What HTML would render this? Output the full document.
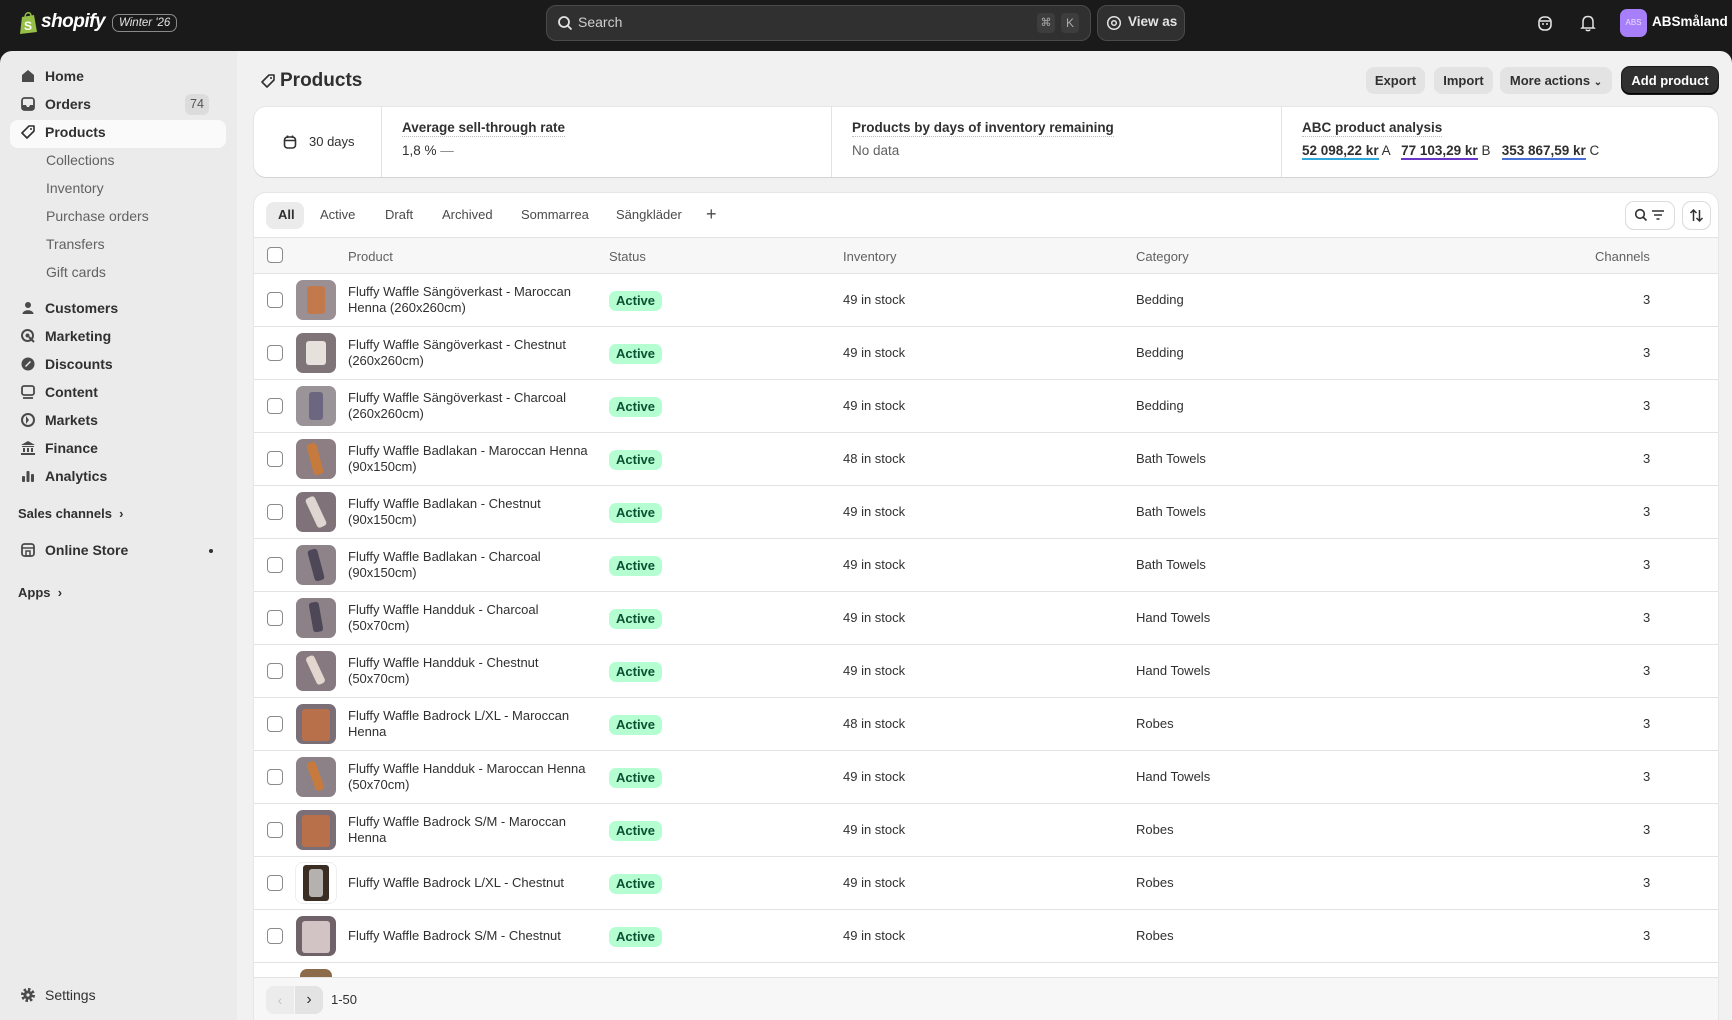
<!DOCTYPE html>
<html style="overflow:hidden;height:1020px"><head><meta charset="utf-8"><style>
*{box-sizing:border-box;margin:0;padding:0}
html,body{overflow:hidden}
body{width:1732px;height:1020px;overflow:hidden;background:#1a1a1a;font-family:"Liberation Sans",sans-serif;color:#303030;font-size:13.5px;position:relative}
.abs{position:absolute}
#top{left:0;top:0;width:1732px;height:51px;background:#1a1a1a}
#side{left:0;top:51px;width:237px;height:969px;background:#ebebeb;border-top-left-radius:12px}
#main{left:237px;top:51px;width:1495px;height:969px;background:#f1f1f1;border-top-right-radius:12px}
.nav{position:absolute;left:45px;font-size:14px;font-weight:600;color:#303030;line-height:20px}
.sub{position:absolute;left:46px;font-size:14px;color:#616161;line-height:20px}
.ic{position:absolute;left:20px;width:16px;height:16px}
.btn{position:absolute;top:67px;height:27px;border-radius:8px;background:#e3e3e3;font-size:13px;font-weight:600;line-height:27px;text-align:center;color:#303030}
.card{position:absolute;background:#fff;border-radius:12px;box-shadow:0 1px 0 #d4d4d4,0 0 0 1px #e6e6e6}
.mt{font-weight:600;font-size:13.5px;border-bottom:1.5px dotted #bbb;padding-bottom:1px;display:inline-block}
.row{position:absolute;left:0;width:1464px;height:53px;border-top:1px solid #e3e3e3}
.cb{position:absolute;left:13px;top:18px;width:16px;height:16px;border:1px solid #8a8a8a;border-radius:4px;background:#fff}
.th{position:absolute;left:42px;top:6px;width:40px;height:40px;border-radius:7px;background:#8e7f86;overflow:hidden}
.th i{position:absolute;display:block;border-radius:3px}
.pn{position:absolute;left:94px;top:10px;width:250px;line-height:16px;font-size:13px;color:#303030}
.pn.one{top:18px}
.st{position:absolute;left:355px;top:17px;background:#b4fed2;color:#0c5132;border-radius:7px;font-size:13px;font-weight:600;padding:2px 7px;line-height:16px}
.inv{position:absolute;left:589px;top:18px;font-size:13px}
.cat{position:absolute;left:882px;top:18px;font-size:13px}
.ch{position:absolute;left:1389px;top:18px;font-size:13px}
.tab{position:absolute;top:12px;font-size:13px;font-weight:500;color:#4a4a4a;line-height:28px}
</style></head><body>
<div id="top" class="abs">
 <svg class="abs" style="left:19px;top:11px" width="20" height="24" viewBox="0 0 20 24"><path d="M3 6 L15 4 L18 21 L1 23 Z" fill="#95bf47"/><path d="M6 6 C6 1 12 0 12 5" stroke="#95bf47" stroke-width="1.5" fill="none"/><text x="5" y="19" font-size="12" font-weight="bold" fill="#fff" font-family="Liberation Sans">S</text></svg>
 <div class="abs" style="left:41px;top:11px;color:#fff;font-size:19px;font-weight:bold;font-style:italic;letter-spacing:-0.5px">shopify</div>
 <div class="abs" style="left:112px;top:14px;border:1px solid #8a8a8a;border-radius:7px;color:#e3e3e3;font-size:11.5px;font-style:italic;padding:2px 6px">Winter '26</div>
 <div class="abs" style="left:546px;top:5px;width:545px;height:36px;background:#303030;border:1px solid #4a4a4a;border-radius:10px"></div>
 <svg class="abs" style="left:557px;top:15px" width="16" height="16" viewBox="0 0 16 16"><circle cx="7" cy="7" r="5" stroke="#e3e3e3" stroke-width="1.8" fill="none"/><path d="M11 11 L14.5 14.5" stroke="#e3e3e3" stroke-width="1.8"/></svg>
 <div class="abs" style="left:578px;top:14px;color:#cfcfcf;font-size:14px">Search</div>
 <div class="abs" style="left:1037px;top:13px;width:18px;height:20px;background:#3d3d3d;border-radius:4px;color:#aaa;font-size:11px;text-align:center;line-height:20px">⌘</div>
 <div class="abs" style="left:1061px;top:13px;width:18px;height:20px;background:#3d3d3d;border-radius:4px;color:#aaa;font-size:12px;text-align:center;line-height:20px">K</div>
 <div class="abs" style="left:1097px;top:5px;width:88px;height:36px;background:#303030;border:1px solid #4a4a4a;border-radius:10px"></div>
 <svg class="abs" style="left:1106px;top:15px" width="16" height="16" viewBox="0 0 16 16"><circle cx="8" cy="8" r="6.3" stroke="#e3e3e3" stroke-width="1.5" fill="none"/><circle cx="8" cy="8" r="2.3" stroke="#e3e3e3" stroke-width="1.5" fill="none"/></svg>
 <div class="abs" style="left:1128px;top:14px;color:#e3e3e3;font-size:13.5px;font-weight:600">View as</div>
 <svg class="abs" style="left:1537px;top:14px" width="16" height="18" viewBox="0 0 16 18"><rect x="2" y="3" width="12" height="13" rx="5" fill="none" stroke="#e3e3e3" stroke-width="1.6"/><path d="M3 7 L13 7 M5 10 L7 10 M9 10 L11 10" stroke="#e3e3e3" stroke-width="1.6"/></svg>
 <svg class="abs" style="left:1580px;top:14px" width="16" height="18" viewBox="0 0 16 18"><path d="M3 13 L3 8 C3 4 5 2.5 8 2.5 C11 2.5 13 4 13 8 L13 13 L14 14 L2 14 Z M6 15.5 C6.5 17 9.5 17 10 15.5" fill="none" stroke="#e3e3e3" stroke-width="1.5"/></svg>
 <div class="abs" style="left:1620px;top:9px;width:27px;height:28px;background:#a77ffa;border-radius:7px;color:#e9e0ff;font-size:8px;text-align:center;line-height:28px">ABS</div>
 <div class="abs" style="left:1652px;top:14px;color:#fff;font-size:13.5px;font-weight:600">ABSmåland</div>
</div>

<div id="side" class="abs">
 <div class="abs" style="left:10px;top:69px;width:216px;height:28px;background:#fafafa;border-radius:8px"></div>
 <div class="abs" style="left:185px;top:43px;width:24px;height:21px;background:#dcdcdc;border-radius:6px;color:#555;font-size:12.5px;text-align:center;line-height:21px">74</div>
</div>
<svg class="ic" style="top:68px" viewBox="0 0 16 16"><path d="M2 7 L8 2 L14 7 L14 14 L2 14 Z" fill="#4a4a4a"/></svg>
<div class="nav" style="top:66px">Home</div>
<svg class="ic" style="top:96px" viewBox="0 0 16 16"><rect x="2" y="2" width="12" height="12" rx="2.5" fill="none" stroke="#4a4a4a" stroke-width="1.8"/><path d="M2 9 L6 9 L7 11 L9 11 L10 9 L14 9 L14 14 L2 14Z" fill="#4a4a4a"/></svg>
<div class="nav" style="top:94px">Orders</div>
<svg class="ic" style="top:124px" viewBox="0 0 16 16"><path d="M9 2 L14 2 L14 7 L7 14 L2 9 Z" fill="none" stroke="#303030" stroke-width="1.6" stroke-linejoin="round"/><circle cx="11" cy="5" r="1" fill="#303030"/></svg>
<div class="nav" style="top:122px">Products</div>
<div class="sub" style="top:150px">Collections</div>
<div class="sub" style="top:178px">Inventory</div>
<div class="sub" style="top:206px">Purchase orders</div>
<div class="sub" style="top:234px">Transfers</div>
<div class="sub" style="top:262px">Gift cards</div>
<svg class="ic" style="top:300px" viewBox="0 0 16 16"><circle cx="8" cy="5" r="3" fill="#4a4a4a"/><path d="M2.5 14 C2.5 9 13.5 9 13.5 14Z" fill="#4a4a4a"/></svg>
<div class="nav" style="top:298px">Customers</div>
<svg class="ic" style="top:328px" viewBox="0 0 16 16"><circle cx="7.5" cy="7.5" r="5.5" fill="none" stroke="#4a4a4a" stroke-width="2"/><circle cx="7.5" cy="7.5" r="2" fill="#4a4a4a"/><path d="M9 9 L14 14" stroke="#4a4a4a" stroke-width="2"/></svg>
<div class="nav" style="top:326px">Marketing</div>
<svg class="ic" style="top:356px" viewBox="0 0 16 16"><circle cx="8" cy="8" r="6.5" fill="#4a4a4a"/><path d="M5.5 10.5 L10.5 5.5" stroke="#ebebeb" stroke-width="1.4"/></svg>
<div class="nav" style="top:354px">Discounts</div>
<svg class="ic" style="top:384px" viewBox="0 0 16 16"><rect x="2" y="2" width="12" height="9" rx="2" fill="none" stroke="#4a4a4a" stroke-width="1.8"/><path d="M3 14 L13 14" stroke="#4a4a4a" stroke-width="1.8"/></svg>
<div class="nav" style="top:382px">Content</div>
<svg class="ic" style="top:412px" viewBox="0 0 16 16"><circle cx="8" cy="8" r="6" fill="none" stroke="#4a4a4a" stroke-width="2"/><path d="M6 4 L9 8 L6 12" fill="#4a4a4a"/></svg>
<div class="nav" style="top:410px">Markets</div>
<svg class="ic" style="top:440px" viewBox="0 0 16 16"><path d="M8 1 L15 5 L1 5 Z M2 6 H14 V7 H2Z M3 8 H5 V12 H3Z M7 8 H9 V12 H7Z M11 8 H13 V12 H11Z M1 13 H15 V15 H1Z" fill="#4a4a4a"/></svg>
<div class="nav" style="top:438px">Finance</div>
<svg class="ic" style="top:468px" viewBox="0 0 16 16"><rect x="2" y="8" width="3" height="6" rx="1" fill="#4a4a4a"/><rect x="6.5" y="3" width="3" height="11" rx="1" fill="#4a4a4a"/><rect x="11" y="6" width="3" height="8" rx="1" fill="#4a4a4a"/></svg>
<div class="nav" style="top:466px">Analytics</div>
<div class="abs" style="left:18px;top:506px;font-size:13px;font-weight:600;color:#303030">Sales channels &nbsp;›</div>
<svg class="ic" style="top:542px" viewBox="0 0 16 16"><rect x="2" y="2" width="12" height="12" rx="2.5" fill="none" stroke="#4a4a4a" stroke-width="1.8"/><path d="M2 6 H14 M6 9 H10 V14 H6Z" stroke="#4a4a4a" stroke-width="1.5" fill="none"/></svg>
<div class="nav" style="top:540px">Online Store</div>
<div class="abs" style="left:209px;top:549px;width:4px;height:4px;border-radius:2px;background:#303030"></div>
<div class="abs" style="left:18px;top:585px;font-size:13px;font-weight:600;color:#303030">Apps &nbsp;›</div>
<svg class="ic" style="top:987px" viewBox="0 0 16 16"><circle cx="8" cy="8" r="5" fill="none" stroke="#4a4a4a" stroke-width="4" stroke-dasharray="2.2 1.7"/><circle cx="8" cy="8" r="4.5" fill="#4a4a4a"/><circle cx="8" cy="8" r="1.6" fill="#ebebeb"/></svg>
<div class="nav" style="top:985px;font-weight:500">Settings</div>

<div id="main" class="abs"></div>
<svg class="abs" style="left:260px;top:73px" width="16" height="16" viewBox="0 0 16 16"><path d="M9 2 L14 2 L14 7 L7 14 L2 9 Z" fill="none" stroke="#303030" stroke-width="1.6" stroke-linejoin="round"/><circle cx="11" cy="5" r="1" fill="#303030"/></svg>
<div class="abs" style="left:280px;top:70px;font-size:19px;font-weight:bold;color:#303030">Products</div>
<div class="btn" style="left:1366px;width:59px">Export</div>
<div class="btn" style="left:1434px;width:59px">Import</div>
<div class="btn" style="left:1500px;width:112px">More actions <span style="font-size:10px">⌄</span></div>
<div class="btn" style="left:1622px;width:96px;background:#303030;color:#fff;box-shadow:inset 0 -1px 0 #000,0 0 0 1px #1a1a1a">Add product</div>

<div class="card" style="left:254px;top:107px;width:1464px;height:70px">
 <svg class="abs" style="left:29px;top:28px" width="14" height="14" viewBox="0 0 14 14"><rect x="1.5" y="2" width="11" height="11" rx="3" fill="none" stroke="#303030" stroke-width="1.6"/><path d="M1.5 5.5 H12.5 M4.5 0.5 V3 M9.5 0.5 V3" stroke="#303030" stroke-width="1.6"/></svg>
 <div class="abs" style="left:55px;top:27px;font-size:13px">30 days</div>
 <div class="abs" style="left:127px;top:0;width:1px;height:70px;background:#e3e3e3"></div>
 <div class="abs" style="left:148px;top:13px"><span class="mt">Average sell-through rate</span><div style="margin-top:6px;font-size:13.5px">1,8 % <span style="color:#888">—</span></div></div>
 <div class="abs" style="left:577px;top:0;width:1px;height:70px;background:#e3e3e3"></div>
 <div class="abs" style="left:598px;top:13px"><span class="mt">Products by days of inventory remaining</span><div style="margin-top:6px;font-size:13.5px;color:#616161">No data</div></div>
 <div class="abs" style="left:1027px;top:0;width:1px;height:70px;background:#e3e3e3"></div>
 <div class="abs" style="left:1048px;top:13px"><span class="mt">ABC product analysis</span>
  <div style="margin-top:6px;font-size:13.5px;white-space:nowrap"><span style="font-weight:600;border-bottom:2px solid #2fa7d8">52 098,22 kr</span> A &nbsp; <span style="font-weight:600;border-bottom:2px solid #6b35c7">77 103,29 kr</span> B &nbsp; <span style="font-weight:600;border-bottom:2px solid #4a6fd6">353 867,59 kr</span> C</div></div>
</div>

<div class="card" style="left:254px;top:193px;width:1464px;height:827px;overflow:hidden;border-bottom-left-radius:0;border-bottom-right-radius:0">
 <div class="abs" style="left:12px;top:9px;width:38px;height:27px;background:#ebebeb;border-radius:8px"></div>
 <div class="tab" style="left:24px;top:8px;color:#303030;font-weight:600">All</div>
 <div class="tab" style="left:66px;top:8px">Active</div>
 <div class="tab" style="left:131px;top:8px">Draft</div>
 <div class="tab" style="left:188px;top:8px">Archived</div>
 <div class="tab" style="left:267px;top:8px">Sommarrea</div>
 <div class="tab" style="left:362px;top:8px">Sängkläder</div>
 <div class="tab" style="left:452px;top:7px;font-size:18px">+</div>
 <div class="abs" style="left:1372px;top:9px;width:48px;height:27px;border-radius:8px;box-shadow:0 0 0 1px #dcdcdc,0 1px 0 #ccc"></div>
 <svg class="abs" style="left:1380px;top:15px" width="34" height="15" viewBox="0 0 34 15"><circle cx="6" cy="6" r="4.3" stroke="#303030" stroke-width="1.6" fill="none"/><path d="M9 9 L12.5 12.5" stroke="#303030" stroke-width="1.6"/><path d="M18 3 H30 M20 7 H28 M22.5 11 H25.5" stroke="#303030" stroke-width="1.6"/></svg>
 <div class="abs" style="left:1429px;top:9px;width:27px;height:27px;border-radius:8px;box-shadow:0 0 0 1px #dcdcdc,0 1px 0 #ccc"></div>
 <svg class="abs" style="left:1435px;top:15px" width="15" height="15" viewBox="0 0 15 15"><path d="M4.5 13 V2 M1.5 5 L4.5 2 L7.5 5 M10.5 2 V13 M7.5 10 L10.5 13 L13.5 10" stroke="#303030" stroke-width="1.5" fill="none"/></svg>
 <div class="abs" style="left:0;top:44px;width:1464px;height:36px;background:#f7f7f7;border-top:1px solid #e3e3e3"></div>
 <div class="cb" style="top:54px"></div>
 <div class="abs" style="left:94px;top:56px;font-size:13px;color:#616161">Product</div>
 <div class="abs" style="left:355px;top:56px;font-size:13px;color:#616161">Status</div>
 <div class="abs" style="left:589px;top:56px;font-size:13px;color:#616161">Inventory</div>
 <div class="abs" style="left:882px;top:56px;font-size:13px;color:#616161">Category</div>
 <div class="abs" style="left:1341px;top:56px;font-size:13px;color:#616161">Channels</div>

 <div class="row" style="top:80px"><div class="cb"></div><div class="th" style="background:#9a8f92"><i style="left:11px;top:6px;width:18px;height:28px;background:#c27a4c"></i></div><div class="pn">Fluffy Waffle Sängöverkast - Maroccan Henna (260x260cm)</div><div class="st">Active</div><div class="inv">49 in stock</div><div class="cat">Bedding</div><div class="ch">3</div></div>
 <div class="row" style="top:133px"><div class="cb"></div><div class="th" style="background:#7f7478"><i style="left:10px;top:8px;width:20px;height:24px;background:#e6e1dc"></i></div><div class="pn">Fluffy Waffle Sängöverkast - Chestnut (260x260cm)</div><div class="st">Active</div><div class="inv">49 in stock</div><div class="cat">Bedding</div><div class="ch">3</div></div>
 <div class="row" style="top:186px"><div class="cb"></div><div class="th" style="background:#9a9397"><i style="left:13px;top:6px;width:14px;height:28px;background:#6d6680"></i></div><div class="pn">Fluffy Waffle Sängöverkast - Charcoal (260x260cm)</div><div class="st">Active</div><div class="inv">49 in stock</div><div class="cat">Bedding</div><div class="ch">3</div></div>
 <div class="row" style="top:239px"><div class="cb"></div><div class="th" style="background:#8c7e83"><i style="left:14px;top:4px;width:10px;height:32px;background:#c67a3e;transform:rotate(-15deg)"></i></div><div class="pn">Fluffy Waffle Badlakan - Maroccan Henna (90x150cm)</div><div class="st">Active</div><div class="inv">48 in stock</div><div class="cat">Bath Towels</div><div class="ch">3</div></div>
 <div class="row" style="top:292px"><div class="cb"></div><div class="th" style="background:#7f7379"><i style="left:15px;top:4px;width:10px;height:32px;background:#dfd6d2;transform:rotate(-25deg)"></i></div><div class="pn">Fluffy Waffle Badlakan - Chestnut (90x150cm)</div><div class="st">Active</div><div class="inv">49 in stock</div><div class="cat">Bath Towels</div><div class="ch">3</div></div>
 <div class="row" style="top:345px"><div class="cb"></div><div class="th" style="background:#8e8388"><i style="left:15px;top:4px;width:10px;height:32px;background:#4e4758;transform:rotate(-15deg)"></i></div><div class="pn">Fluffy Waffle Badlakan - Charcoal (90x150cm)</div><div class="st">Active</div><div class="inv">49 in stock</div><div class="cat">Bath Towels</div><div class="ch">3</div></div>
 <div class="row" style="top:398px"><div class="cb"></div><div class="th" style="background:#8c8186"><i style="left:15px;top:4px;width:10px;height:30px;background:#4e4758;transform:rotate(-10deg)"></i></div><div class="pn">Fluffy Waffle Handduk - Charcoal (50x70cm)</div><div class="st">Active</div><div class="inv">49 in stock</div><div class="cat">Hand Towels</div><div class="ch">3</div></div>
 <div class="row" style="top:451px"><div class="cb"></div><div class="th" style="background:#867980"><i style="left:15px;top:4px;width:9px;height:30px;background:#e2d6cf;transform:rotate(-25deg)"></i></div><div class="pn">Fluffy Waffle Handduk - Chestnut (50x70cm)</div><div class="st">Active</div><div class="inv">49 in stock</div><div class="cat">Hand Towels</div><div class="ch">3</div></div>
 <div class="row" style="top:504px"><div class="cb"></div><div class="th" style="background:#7b6f77"><i style="left:6px;top:5px;width:28px;height:32px;background:#b8704a"></i></div><div class="pn">Fluffy Waffle Badrock L/XL - Maroccan Henna</div><div class="st">Active</div><div class="inv">48 in stock</div><div class="cat">Robes</div><div class="ch">3</div></div>
 <div class="row" style="top:557px"><div class="cb"></div><div class="th" style="background:#8c8186"><i style="left:15px;top:4px;width:9px;height:30px;background:#c67a3e;transform:rotate(-20deg)"></i></div><div class="pn">Fluffy Waffle Handduk - Maroccan Henna (50x70cm)</div><div class="st">Active</div><div class="inv">49 in stock</div><div class="cat">Hand Towels</div><div class="ch">3</div></div>
 <div class="row" style="top:610px"><div class="cb"></div><div class="th" style="background:#7b6f77"><i style="left:6px;top:5px;width:28px;height:32px;background:#b8704a"></i></div><div class="pn">Fluffy Waffle Badrock S/M - Maroccan Henna</div><div class="st">Active</div><div class="inv">49 in stock</div><div class="cat">Robes</div><div class="ch">3</div></div>
 <div class="row" style="top:663px"><div class="cb"></div><div class="th" style="background:#fff;box-shadow:0 0 0 1px #eee"><i style="left:7px;top:2px;width:26px;height:36px;background:#3a2e24"></i><i style="left:13px;top:6px;width:14px;height:28px;background:#b5b1ae"></i></div><div class="pn one">Fluffy Waffle Badrock L/XL - Chestnut</div><div class="st">Active</div><div class="inv">49 in stock</div><div class="cat">Robes</div><div class="ch">3</div></div>
 <div class="row" style="top:716px"><div class="cb"></div><div class="th" style="background:#6f6268"><i style="left:6px;top:5px;width:28px;height:32px;background:#d2c3c4"></i></div><div class="pn one">Fluffy Waffle Badrock S/M - Chestnut</div><div class="st">Active</div><div class="inv">49 in stock</div><div class="cat">Robes</div><div class="ch">3</div></div>
 <div class="row" style="top:769px"><div class="th" style="left:46px;width:32px;background:#8c6b4a"></div></div>
 <div class="abs" style="left:0;top:784px;width:1464px;height:60px;background:#f7f7f7;border-top:1px solid #e3e3e3"></div>
 <div class="abs" style="left:12px;top:793px;width:28px;height:28px;background:#ececec;border-radius:8px 0 0 8px;color:#c4c4c4;text-align:center;line-height:28px;font-size:14px">‹</div>
 <div class="abs" style="left:41px;top:793px;width:28px;height:28px;background:#e3e3e3;border-radius:0 8px 8px 0;color:#303030;text-align:center;line-height:27px;font-size:16px">›</div>
 <div class="abs" style="left:77px;top:799px;font-size:13px">1-50</div>
</div>
</body></html>
